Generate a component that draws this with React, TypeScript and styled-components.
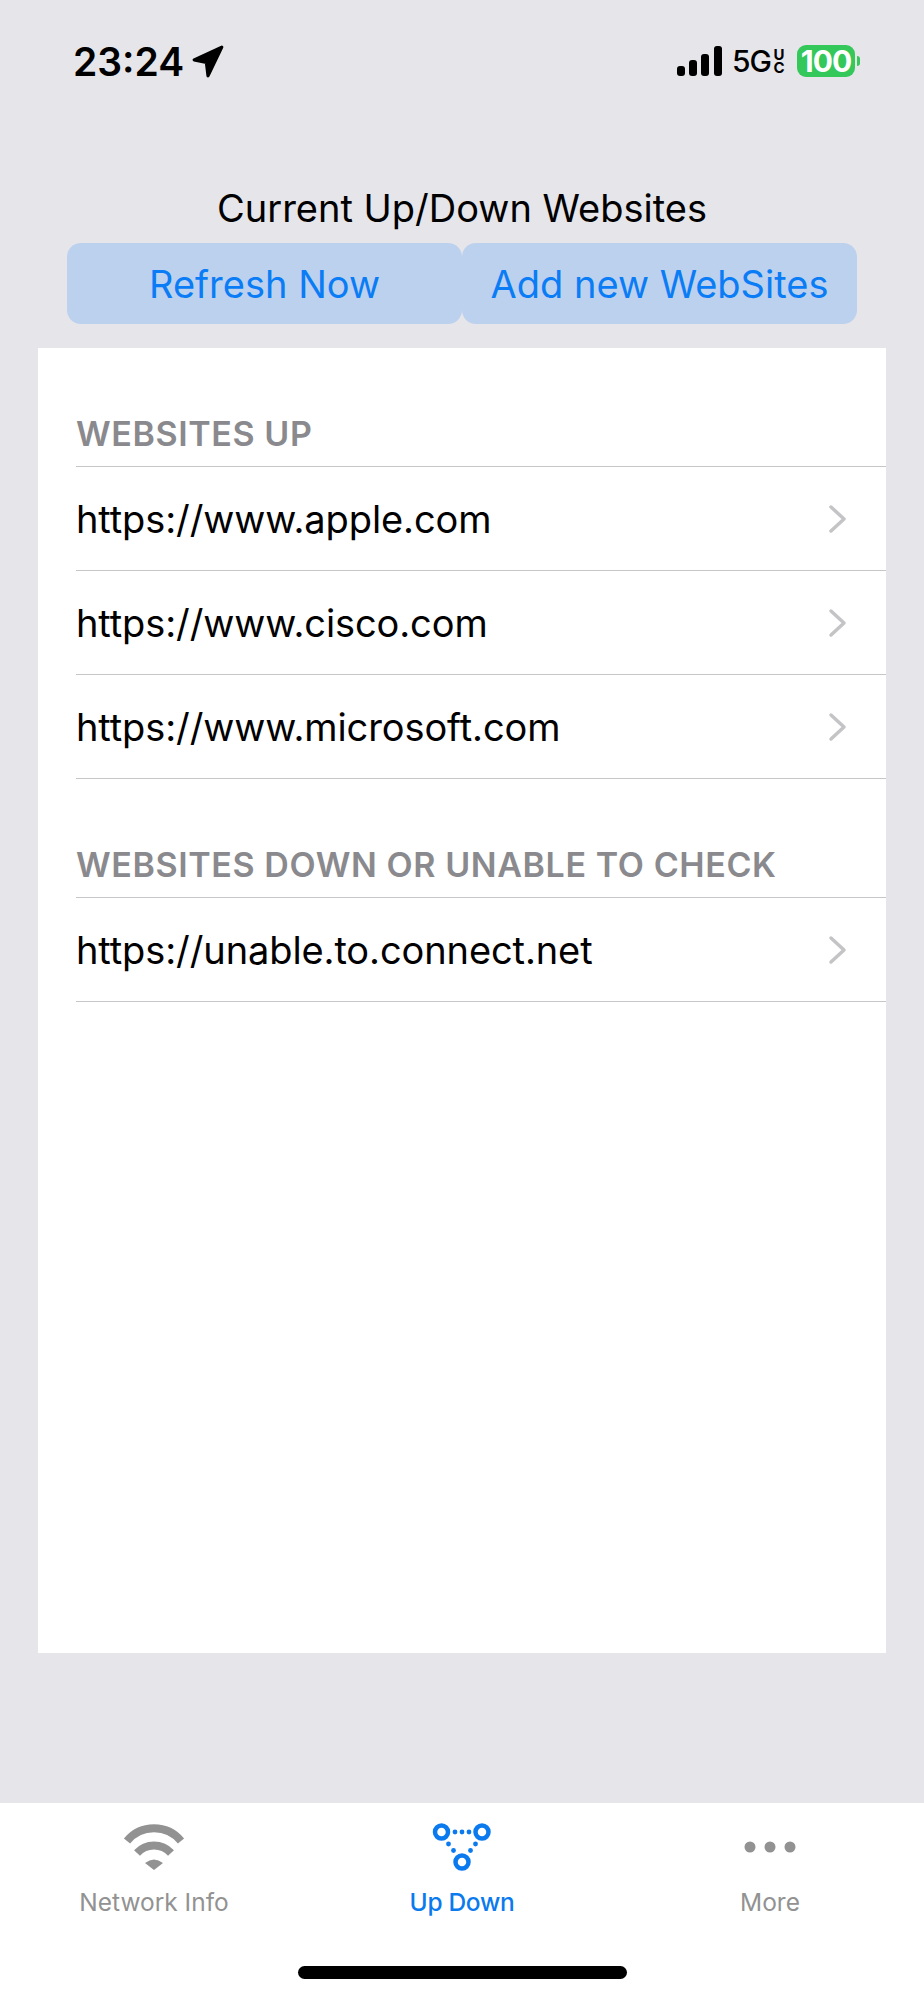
import styled, { createGlobalStyle } from 'styled-components';

const GlobalStyle = createGlobalStyle`
  html, body {
    margin: 0;
    padding: 0;
    background: #e5e5ea;
  }
  * {
    box-sizing: border-box;
  }
`;

const sections = [
  {
    title: 'WEBSITES UP',
    sites: ['https://www.apple.com', 'https://www.cisco.com', 'https://www.microsoft.com'],
  },
  {
    title: 'WEBSITES DOWN OR UNABLE TO CHECK',
    sites: ['https://unable.to.connect.net'],
  },
];

function LocationArrow() {
  return (
    <svg width="34" height="34" viewBox="0 0 32 32">
      <path
        d="M29 2 L3 14 L14.5 16.5 L16 29 Z"
        fill="#000"
        stroke="#000"
        strokeWidth="3"
        strokeLinejoin="round"
      />
    </svg>
  );
}

function SignalBars() {
  return (
    <svg width="46" height="30" viewBox="0 0 46 30">
      <rect x="0" y="20" width="8" height="10" rx="3" fill="#000" />
      <rect x="12" y="14" width="8" height="16" rx="3" fill="#000" />
      <rect x="24" y="8" width="8" height="22" rx="3" fill="#000" />
      <rect x="37" y="0" width="8" height="30" rx="3" fill="#000" />
    </svg>
  );
}

function Chevron() {
  return (
    <svg width="20" height="30" viewBox="0 0 20 30">
      <path d="M3 3 L16 15 L3 27" fill="none" stroke="#c4c4c7" strokeWidth="3.5" strokeLinecap="round" strokeLinejoin="round" />
    </svg>
  );
}

function WifiIcon() {
  return (
    <svg width="64" height="48" viewBox="0 0 64 48">
      <path d="M5 18 A35 35 0 0 1 59 18" fill="none" stroke="#929292" strokeWidth="8" />
      <path d="M15 30 A23 23 0 0 1 49 30" fill="none" stroke="#929292" strokeWidth="8" />
      <path d="M23 40 Q32 33 41 40 L32 47 Z" fill="#929292" />
    </svg>
  );
}

function UpDownIcon() {
  return (
    <svg width="60" height="48" viewBox="0 0 60 48">
      <g fill="none" stroke="#0a7aee" strokeWidth="4.5">
        <circle cx="9.5" cy="9" r="6.5" />
        <circle cx="50" cy="9" r="6.5" />
        <circle cx="30" cy="39" r="6.5" />
      </g>
      <g fill="#0a7aee">
        <circle cx="23" cy="9" r="2.4" />
        <circle cx="30" cy="9" r="2.4" />
        <circle cx="37" cy="9" r="2.4" />
        <circle cx="16.5" cy="21" r="2.4" />
        <circle cx="21.5" cy="27.5" r="2.4" />
        <circle cx="43.5" cy="21" r="2.4" />
        <circle cx="38.5" cy="27.5" r="2.4" />
      </g>
    </svg>
  );
}

function MoreIcon() {
  return (
    <svg width="52" height="14" viewBox="0 0 52 14">
      <circle cx="6" cy="7" r="5.5" fill="#929292" />
      <circle cx="26" cy="7" r="5.5" fill="#929292" />
      <circle cx="46" cy="7" r="5.5" fill="#929292" />
    </svg>
  );
}

export default function App() {
  return (
    <>
      <GlobalStyle />
      <Page>
        <StatusBar>
          <TimeGroup>
            <Time>23:24</Time>
            <LocationArrow />
          </TimeGroup>
          <StatusRight>
            <SignalBars />
            <Network>
              <span>5G</span>
              <NetworkSuffix>UC</NetworkSuffix>
            </Network>
            <Battery>
              <BatteryBody>100</BatteryBody>
              <BatteryNub />
            </Battery>
          </StatusRight>
        </StatusBar>

        <Title>Current Up/Down Websites</Title>
        <ButtonRow>
          <ActionButton>Refresh Now</ActionButton>
          <ActionButton>Add new WebSites</ActionButton>
        </ButtonRow>

        <Panel>
          {sections.map((section) => (
            <Section key={section.title}>
              <SectionHeader>{section.title}</SectionHeader>
              {section.sites.map((site) => (
                <Row key={site}>
                  <RowText>{site}</RowText>
                  <Chevron />
                </Row>
              ))}
            </Section>
          ))}
        </Panel>

        <TabBar>
          <Tabs>
            <Tab>
              <TabIcon>
                <WifiIcon />
              </TabIcon>
              <TabLabel>Network Info</TabLabel>
            </Tab>
            <Tab $active>
              <TabIcon>
                <UpDownIcon />
              </TabIcon>
              <TabLabel>Up Down</TabLabel>
            </Tab>
            <Tab>
              <TabIcon>
                <MoreIcon />
              </TabIcon>
              <TabLabel>More</TabLabel>
            </Tab>
          </Tabs>
          <HomeIndicator />
        </TabBar>
      </Page>
    </>
  );
}

const Page = styled.div`
  width: 924px;
  height: 2000px;
  display: flex;
  flex-direction: column;
  background: #e5e5ea;
  font-family: Inter, 'Liberation Sans', sans-serif;
  color: #000;
  overflow: hidden;
`;

const StatusBar = styled.div`
  height: 182px;
  padding: 44px 64px 0 73px;
  display: flex;
  justify-content: space-between;
  align-items: flex-start;
`;

const TimeGroup = styled.div`
  display: flex;
  align-items: center;
  gap: 7px;
`;

const Time = styled.div`
  font-size: 39px;
  line-height: 36px;
  font-weight: 600;
`;

const StatusRight = styled.div`
  display: flex;
  align-items: center;
  gap: 12px;
  height: 34px;
`;

const Network = styled.div`
  display: flex;
  align-items: center;
  gap: 2px;
  margin-left: -3px;
  font-size: 30px;
  font-weight: 500;
  letter-spacing: -1px;
`;

const NetworkSuffix = styled.div`
  width: 12px;
  font-size: 15px;
  line-height: 13px;
  font-weight: 700;
  letter-spacing: 0;
  text-align: center;
  word-break: break-all;
`;

const Battery = styled.div`
  display: flex;
  align-items: center;
  gap: 2px;
`;

const BatteryBody = styled.div`
  width: 58px;
  height: 32px;
  border-radius: 9px;
  background: #34c759;
  color: #fff;
  font-size: 30px;
  line-height: 32px;
  font-weight: 700;
  text-align: center;
  letter-spacing: -1px;
`;

const BatteryNub = styled.div`
  width: 3px;
  height: 10px;
  border-radius: 0 3px 3px 0;
  background: #34c759;
`;

const Title = styled.div`
  height: 58px;
  display: flex;
  align-items: center;
  justify-content: center;
  font-size: 38px;
  padding-bottom: 6px;
`;

const ButtonRow = styled.div`
  display: flex;
  height: 81px;
  margin: 3px 67px 0;
`;

const ActionButton = styled.div`
  flex: 1;
  display: flex;
  align-items: center;
  justify-content: center;
  border-radius: 14px;
  background: #bcd1ee;
  color: #0a7cf5;
  font-size: 38px;
`;

const Panel = styled.div`
  height: 1305px;
  margin: 24px 38px 0;
  padding-left: 38px;
  background: #fff;
`;

const Section = styled.div`
  display: flex;
  flex-direction: column;
`;

const SectionHeader = styled.div`
  height: 119px;
  display: flex;
  align-items: flex-end;
  padding-bottom: 12px;
  border-bottom: 1px solid #c6c6c8;
  color: #8a8a8e;
  font-size: 34px;
  font-weight: 600;
  letter-spacing: 0.6px;
`;

const Row = styled.div`
  height: 104px;
  display: flex;
  align-items: center;
  justify-content: space-between;
  padding-right: 38px;
  border-bottom: 1px solid #c6c6c8;
`;

const RowText = styled.div`
  font-size: 38px;
  letter-spacing: -0.1px;
`;

const TabBar = styled.div`
  height: 197px;
  margin-top: auto;
  background: #fff;
  display: flex;
  flex-direction: column;
  align-items: center;
`;

const Tabs = styled.div`
  width: 100%;
  display: grid;
  grid-template-columns: repeat(3, 1fr);
  padding-top: 20px;
`;

const Tab = styled.div<{ $active?: boolean }>`
  display: flex;
  flex-direction: column;
  align-items: center;
  color: ${(props) => (props.$active ? '#0a7aee' : '#929292')};
  font-weight: ${(props) => (props.$active ? 500 : 400)};
  letter-spacing: ${(props) => (props.$active ? '-0.3px' : '0')};
`;

const TabIcon = styled.div`
  height: 48px;
  display: flex;
  align-items: center;
  justify-content: center;
`;

const TabLabel = styled.div`
  margin-top: 16px;
  font-size: 24.5px;
  line-height: 30px;
`;

const HomeIndicator = styled.div`
  width: 329px;
  height: 13px;
  margin-top: 49px;
  border-radius: 7px;
  background: #000;
`;
